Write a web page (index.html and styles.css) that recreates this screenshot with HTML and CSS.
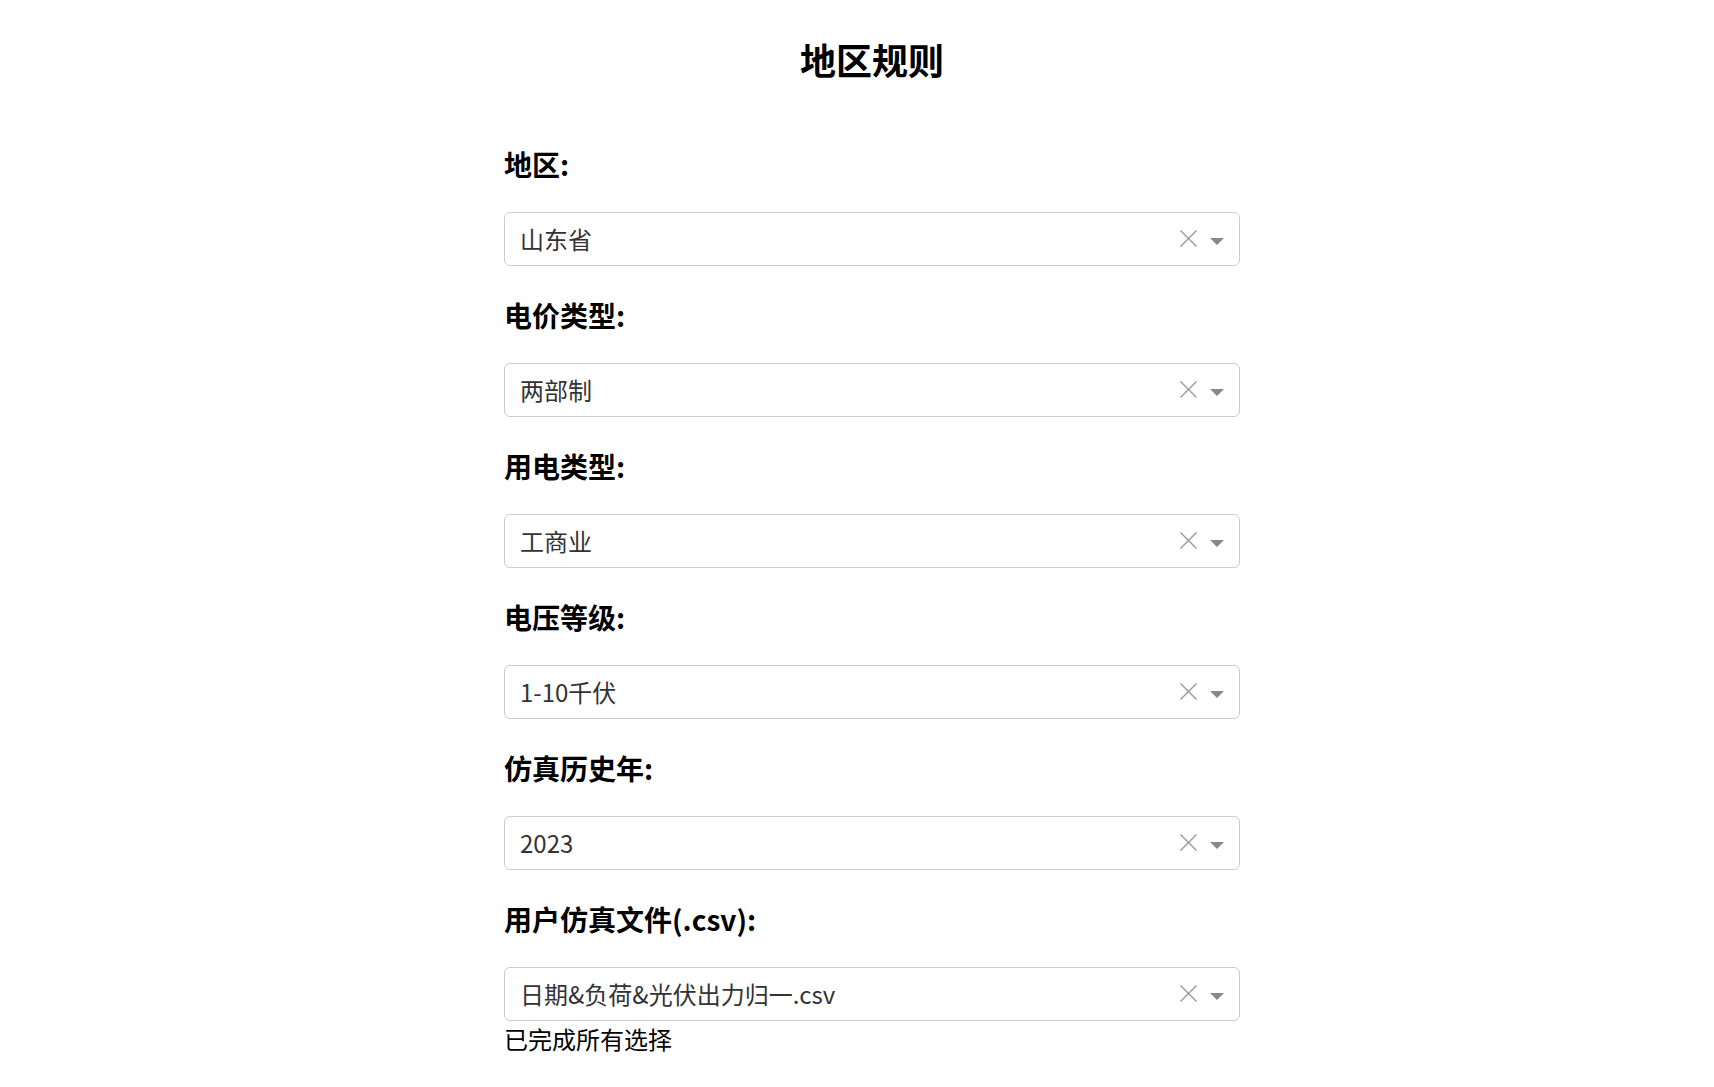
FILE: index.html
```html
<!DOCTYPE html>
<html lang="zh">
<head>
<meta charset="utf-8">
<title>地区规则</title>
<link rel="stylesheet" href="styles.css">
</head>
<body>
<div class="page">
  <h2 class="title">地区规则</h2>
  <div class="form">
    <div class="field">
      <h3 class="label">地区:</h3>
      <div class="select"><span class="value">山东省</span><span class="clear"><svg width="19" height="19" viewBox="0 0 19 19"><path d="M1.5 1.5L17.5 17.5M17.5 1.5L1.5 17.5"/></svg></span><span class="arrow-zone"><span class="arrow"></span></span></div>
    </div>
    <div class="field">
      <h3 class="label">电价类型:</h3>
      <div class="select"><span class="value">两部制</span><span class="clear"><svg width="19" height="19" viewBox="0 0 19 19"><path d="M1.5 1.5L17.5 17.5M17.5 1.5L1.5 17.5"/></svg></span><span class="arrow-zone"><span class="arrow"></span></span></div>
    </div>
    <div class="field">
      <h3 class="label">用电类型:</h3>
      <div class="select"><span class="value">工商业</span><span class="clear"><svg width="19" height="19" viewBox="0 0 19 19"><path d="M1.5 1.5L17.5 17.5M17.5 1.5L1.5 17.5"/></svg></span><span class="arrow-zone"><span class="arrow"></span></span></div>
    </div>
    <div class="field">
      <h3 class="label">电压等级:</h3>
      <div class="select"><span class="value">1-10千伏</span><span class="clear"><svg width="19" height="19" viewBox="0 0 19 19"><path d="M1.5 1.5L17.5 17.5M17.5 1.5L1.5 17.5"/></svg></span><span class="arrow-zone"><span class="arrow"></span></span></div>
    </div>
    <div class="field">
      <h3 class="label">仿真历史年:</h3>
      <div class="select"><span class="value">2023</span><span class="clear"><svg width="19" height="19" viewBox="0 0 19 19"><path d="M1.5 1.5L17.5 17.5M17.5 1.5L1.5 17.5"/></svg></span><span class="arrow-zone"><span class="arrow"></span></span></div>
    </div>
    <div class="field">
      <h3 class="label">用户仿真文件(.csv):</h3>
      <div class="select"><span class="value">日期&amp;负荷&amp;光伏出力归一.csv</span><span class="clear"><svg width="19" height="19" viewBox="0 0 19 19"><path d="M1.5 1.5L17.5 17.5M17.5 1.5L1.5 17.5"/></svg></span><span class="arrow-zone"><span class="arrow"></span></span></div>
    </div>
    <div class="status">已完成所有选择</div>
  </div>
</div>
</body>
</html>
```

FILE: styles.css
```css
html, body {
  margin: 0;
  padding: 0;
  background: #ffffff;
}

body {
  padding-left: 30px;
  font-family: "Noto Sans CJK SC", "Noto Sans", sans-serif;
  font-size: 24px;
  color: #000;
}

.page {
  width: 736px;
  margin: 0 auto;
  padding-top: 33px;
}

.title {
  margin: 0 0 59px 0;
  font-size: 36px;
  font-weight: 700;
  line-height: 52px;
  text-align: center;
  color: #000;
}

.label {
  margin: 29px 0 27px 0;
  font-size: 28px;
  font-weight: 700;
  line-height: 41px;
  color: #000;
}

.field:first-child .label {
  margin-top: 0;
}

.select {
  display: flex;
  align-items: center;
  height: 54px;
  box-sizing: border-box;
  border: 1px solid #ccc;
  border-radius: 6px;
  background: #fff;
}

.value {
  flex: 1;
  padding-left: 15px;
  padding-bottom: 2px;
  color: #333;
  font-size: 24px;
  line-height: 49px;
  white-space: nowrap;
  overflow: hidden;
}

.clear {
  width: 25.5px;
  display: flex;
  justify-content: center;
  align-items: center;
  margin-top: -1px;
}

.clear svg path {
  stroke: #999;
  stroke-width: 1.4;
  fill: none;
}

.arrow-zone {
  width: 30px;
  padding-right: 7.5px;
  display: flex;
  justify-content: center;
  align-items: center;
  margin-top: 5px;
}

.arrow {
  width: 0;
  height: 0;
  border-style: solid;
  border-width: 7.5px 7px 0 7px;
  border-color: #888 transparent transparent transparent;
}

.status {
  font-size: 24px;
  line-height: 35px;
  color: #000;
}
```
